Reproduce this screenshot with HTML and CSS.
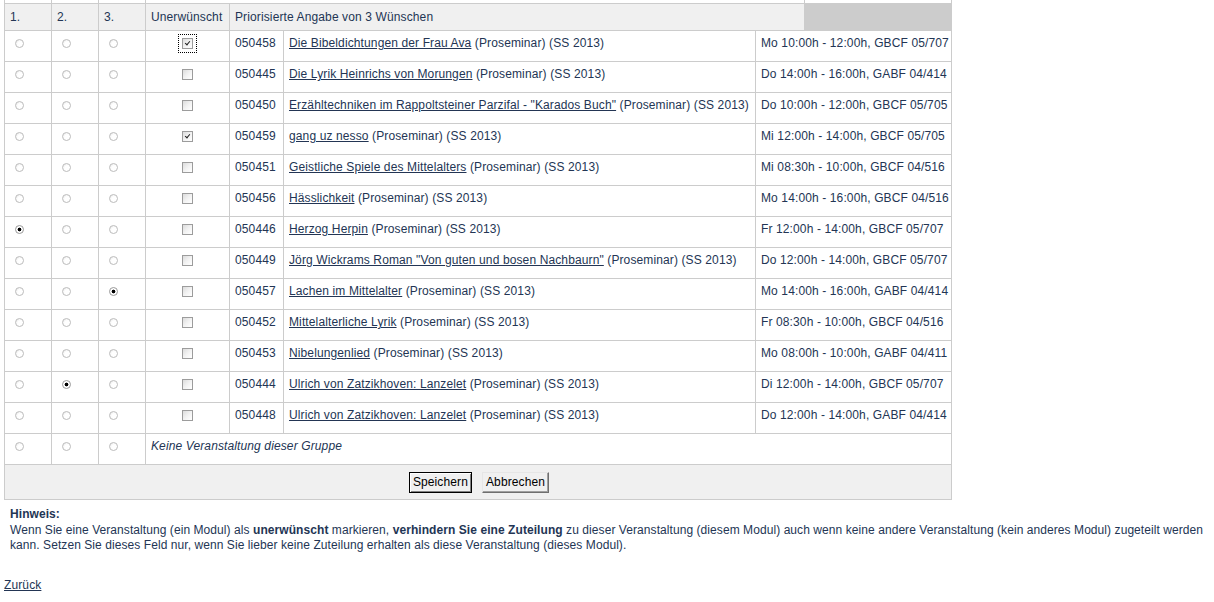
FILE: index.html
```html
<!DOCTYPE html>
<html lang="de">
<head>
<meta charset="utf-8">
<title>Priorisierte Angabe</title>
<link rel="stylesheet" href="styles.css">
</head>
<body>
<form class="page">
<table class="prio">
  <colgroup>
    <col class="w-r"><col class="w-r"><col class="w-r"><col class="w-u"><col class="w-n"><col class="w-t"><col class="w-x"><col class="w-g">
  </colgroup>
  <tr class="top"><td></td><td></td><td></td><td colspan="4"></td><td></td></tr>
  <tr class="head">
    <th>1.</th><th>2.</th><th>3.</th><th>Unerwünscht</th><th colspan="3">Priorisierte Angabe von 3 Wünschen</th><th class="blank"></th>
  </tr>
  <tr class="row">
    <td><input type="radio" name="p1"></td><td><input type="radio" name="p2"></td><td><input type="radio" name="p3"></td>
    <td class="chk"><input type="checkbox" class="focus" checked></td>
    <td>050458</td><td><a href="#">Die Bibeldichtungen der Frau Ava</a> (Proseminar) (SS 2013)</td><td colspan="2">Mo 10:00h - 12:00h, GBCF 05/707</td>
  </tr>
  <tr class="row">
    <td><input type="radio" name="p1"></td><td><input type="radio" name="p2"></td><td><input type="radio" name="p3"></td>
    <td class="chk"><input type="checkbox"></td>
    <td>050445</td><td><a href="#">Die Lyrik Heinrichs von Morungen</a> (Proseminar) (SS 2013)</td><td colspan="2">Do 14:00h - 16:00h, GABF 04/414</td>
  </tr>
  <tr class="row">
    <td><input type="radio" name="p1"></td><td><input type="radio" name="p2"></td><td><input type="radio" name="p3"></td>
    <td class="chk"><input type="checkbox"></td>
    <td>050450</td><td><a href="#">Erzähltechniken im Rappoltsteiner Parzifal - "Karados Buch"</a> (Proseminar) (SS 2013)</td><td colspan="2">Do 10:00h - 12:00h, GBCF 05/705</td>
  </tr>
  <tr class="row">
    <td><input type="radio" name="p1"></td><td><input type="radio" name="p2"></td><td><input type="radio" name="p3"></td>
    <td class="chk"><input type="checkbox" checked></td>
    <td>050459</td><td><a href="#">gang uz nesso</a> (Proseminar) (SS 2013)</td><td colspan="2">Mi 12:00h - 14:00h, GBCF 05/705</td>
  </tr>
  <tr class="row">
    <td><input type="radio" name="p1"></td><td><input type="radio" name="p2"></td><td><input type="radio" name="p3"></td>
    <td class="chk"><input type="checkbox"></td>
    <td>050451</td><td><a href="#">Geistliche Spiele des Mittelalters</a> (Proseminar) (SS 2013)</td><td colspan="2">Mi 08:30h - 10:00h, GBCF 04/516</td>
  </tr>
  <tr class="row">
    <td><input type="radio" name="p1"></td><td><input type="radio" name="p2"></td><td><input type="radio" name="p3"></td>
    <td class="chk"><input type="checkbox"></td>
    <td>050456</td><td><a href="#">Hässlichkeit</a> (Proseminar) (SS 2013)</td><td colspan="2">Mo 14:00h - 16:00h, GBCF 04/516</td>
  </tr>
  <tr class="row">
    <td><input type="radio" name="p1" checked></td><td><input type="radio" name="p2"></td><td><input type="radio" name="p3"></td>
    <td class="chk"><input type="checkbox"></td>
    <td>050446</td><td><a href="#">Herzog Herpin</a> (Proseminar) (SS 2013)</td><td colspan="2">Fr 12:00h - 14:00h, GBCF 05/707</td>
  </tr>
  <tr class="row">
    <td><input type="radio" name="p1"></td><td><input type="radio" name="p2"></td><td><input type="radio" name="p3"></td>
    <td class="chk"><input type="checkbox"></td>
    <td>050449</td><td><a href="#">Jörg Wickrams Roman "Von guten und bosen Nachbaurn"</a> (Proseminar) (SS 2013)</td><td colspan="2">Do 12:00h - 14:00h, GBCF 05/707</td>
  </tr>
  <tr class="row">
    <td><input type="radio" name="p1"></td><td><input type="radio" name="p2"></td><td><input type="radio" name="p3" checked></td>
    <td class="chk"><input type="checkbox"></td>
    <td>050457</td><td><a href="#">Lachen im Mittelalter</a> (Proseminar) (SS 2013)</td><td colspan="2">Mo 14:00h - 16:00h, GABF 04/414</td>
  </tr>
  <tr class="row">
    <td><input type="radio" name="p1"></td><td><input type="radio" name="p2"></td><td><input type="radio" name="p3"></td>
    <td class="chk"><input type="checkbox"></td>
    <td>050452</td><td><a href="#">Mittelalterliche Lyrik</a> (Proseminar) (SS 2013)</td><td colspan="2">Fr 08:30h - 10:00h, GBCF 04/516</td>
  </tr>
  <tr class="row">
    <td><input type="radio" name="p1"></td><td><input type="radio" name="p2"></td><td><input type="radio" name="p3"></td>
    <td class="chk"><input type="checkbox"></td>
    <td>050453</td><td><a href="#">Nibelungenlied</a> (Proseminar) (SS 2013)</td><td colspan="2">Mo 08:00h - 10:00h, GABF 04/411</td>
  </tr>
  <tr class="row">
    <td><input type="radio" name="p1"></td><td><input type="radio" name="p2" checked></td><td><input type="radio" name="p3"></td>
    <td class="chk"><input type="checkbox"></td>
    <td>050444</td><td><a href="#">Ulrich von Zatzikhoven: Lanzelet</a> (Proseminar) (SS 2013)</td><td colspan="2">Di 12:00h - 14:00h, GBCF 05/707</td>
  </tr>
  <tr class="row">
    <td><input type="radio" name="p1"></td><td><input type="radio" name="p2"></td><td><input type="radio" name="p3"></td>
    <td class="chk"><input type="checkbox"></td>
    <td>050448</td><td><a href="#">Ulrich von Zatzikhoven: Lanzelet</a> (Proseminar) (SS 2013)</td><td colspan="2">Do 12:00h - 14:00h, GABF 04/414</td>
  </tr>
  <tr class="row">
    <td><input type="radio" name="p1"></td><td><input type="radio" name="p2"></td><td><input type="radio" name="p3"></td>
    <td colspan="5" class="none">Keine Veranstaltung dieser Gruppe</td>
  </tr>
  <tr class="actions-row">
    <td colspan="8">
      <div class="actions">
        <button type="button" class="btn btn-default">Speichern</button>
        <button type="button" class="btn">Abbrechen</button>
      </div>
    </td>
  </tr>
</table>
</form>
<div class="note">
  <div class="note-title">Hinweis:</div>
  <p class="note-text">Wenn Sie eine Veranstaltung (ein Modul) als <b>unerwünscht</b> markieren, <b>verhindern Sie eine Zuteilung</b> zu dieser Veranstaltung (diesem Modul) auch wenn keine andere Veranstaltung (kein anderes Modul) zugeteilt werden kann. Setzen Sie dieses Feld nur, wenn Sie lieber keine Zuteilung erhalten als diese Veranstaltung (dieses Modul).</p>
</div>
<div class="back"><a href="#">Zurück</a></div>
</body>
</html>
```
FILE: styles.css
```css
html, body {
  margin: 0;
  background: #ffffff;
}
body {
  padding: 0 4px;
  font-family: "Liberation Sans", Arial, sans-serif;
  font-size: 12px;
  line-height: 14px;
  letter-spacing: 0.12px;
  color: #233554;
}
a {
  color: #233554;
  text-decoration: underline;
}
.page {
  margin: 0;
}
.prio {
  border-collapse: collapse;
  table-layout: fixed;
  width: 948px;
}
.w-r { width: 47px; }
.w-u { width: 84px; }
.w-n { width: 54px; }
.w-t { width: 472px; }
.w-x { width: 49px; }
.w-g { width: 147px; }

.prio td,
.prio th {
  border: 1px solid #cccccc;
  padding: 0 5px;
  text-align: left;
  font-weight: normal;
  white-space: nowrap;
  overflow: hidden;
}
.top td {
  border-top: none;
  height: 3px;
  padding: 0;
  font-size: 0;
  line-height: 0;
}
.head th {
  background: #f0f0f0;
  height: 26px;
  vertical-align: middle;
}
.head th.blank {
  background: #cccccc;
}
.row td {
  height: 31px;
  box-sizing: border-box;
  vertical-align: top;
  padding-top: 5px;
}
.row td.chk {
  text-align: center;
}
.row td.none {
  font-style: italic;
}

input[type="radio"] {
  -webkit-appearance: none;
  appearance: none;
  display: block;
  width: 9px;
  height: 9px;
  margin: 3px 0 0 5px;
  border: 1px solid #bdbdbd;
  border-radius: 50%;
  background: radial-gradient(circle at 65% 65%, #ffffff 0, #ffffff 45%, #e4e4e4 100%);
  box-sizing: border-box;
}
input[type="radio"]:checked {
  border-color: #9a9a9a;
  background: radial-gradient(circle, #000000 0, #000000 1.6px, #ffffff 2.2px, #ffffff 100%);
}

input[type="checkbox"] {
  -webkit-appearance: none;
  appearance: none;
  position: relative;
  display: block;
  width: 11px;
  height: 11px;
  margin: 2px auto 0;
  border: 1px solid #9c9c9c;
  background: linear-gradient(135deg, #dcdcdc 0%, #f4f4f4 55%, #ffffff 100%);
  box-sizing: border-box;
}
input[type="checkbox"]:checked::after {
  content: "";
  position: absolute;
  left: 2px;
  top: 1px;
  width: 4px;
  height: 2px;
  border-left: 1.5px solid #222222;
  border-bottom: 1.5px solid #222222;
  transform: rotate(-50deg);
  transform-origin: 50% 50%;
  margin-top: 1px;
}
input[type="checkbox"].focus {
  outline: 1px dotted #000000;
  outline-offset: 3px;
}

.actions-row td {
  background: #f0f0f0;
  height: 34px;
  vertical-align: middle;
  padding: 0;
}
.actions {
  display: flex;
  justify-content: center;
  gap: 10px;
  padding-left: 2px;
}
.btn {
  font-family: "Liberation Sans", Arial, sans-serif;
  font-size: 12px;
  letter-spacing: 0.12px;
  color: #000000;
  height: 21px;
  padding: 0 3px;
  background: #f0f0f0;
  border: 1px solid;
  border-color: #e6e6e6 #6f6f6f #6f6f6f #e6e6e6;
  border-radius: 0;
  box-shadow: inset -1px -1px 0 #a0a0a0;
}
.btn-default {
  border-color: #000000;
  box-shadow: inset 1px 1px 0 #ffffff, inset -1px -1px 0 #808080;
}

.note {
  padding: 7px 0 0 6px;
  line-height: 15.5px;
  letter-spacing: 0.07px;
}
.note-title {
  font-weight: bold;
}
.note-text {
  margin: 0;
}
.back {
  margin-top: 23px;
  line-height: 16px;
}
```
